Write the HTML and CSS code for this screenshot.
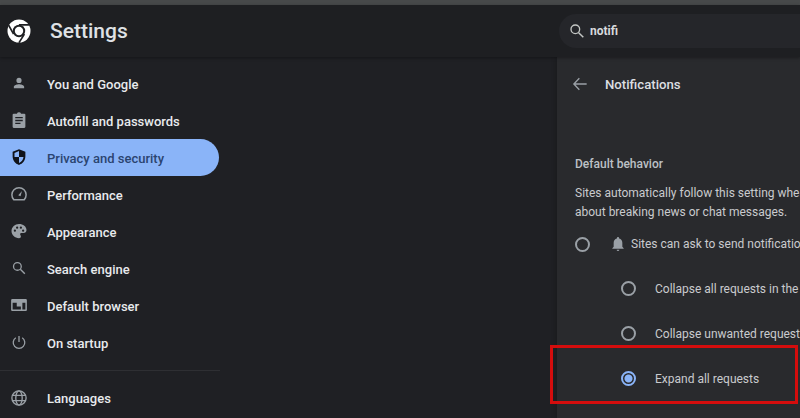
FILE: index.html
```html
<!DOCTYPE html>
<html lang="en">
<head>
<meta charset="utf-8">
<title>Settings</title>
<link rel="stylesheet" href="styles.css">
</head>
<body>
<div class="strip"></div>
<header class="header">
  <svg class="logo" viewBox="0 0 24 24" width="24" height="24"><circle cx="12" cy="12" r="11.5" fill="#fff"/><circle cx="12" cy="12" r="6.2" fill="#1f2023"/><circle cx="12" cy="12" r="4.2" fill="#fff"/><path d="M12 5.8h10.2M6.6 15.1 1.6 6.2M17.4 15.1 12 23.6" stroke="#1f2023" stroke-width="1.7" fill="none"/></svg>
  <h1 class="title">Settings</h1>
  <div class="search">
    <svg class="search-icon" viewBox="0 0 24 24" width="16" height="16"><circle cx="9.5" cy="9.5" r="6.5" fill="none" stroke="#c4c7c5" stroke-width="2"/><path d="m14.5 14.5 7 7" stroke="#c4c7c5" stroke-width="2.2"/></svg>
    <span class="query">notifi</span>
  </div>
</header>
<div class="main">
  <nav class="sidebar">
    <a class="item"><svg class="ico" viewBox="-2 -2 28 28"><circle cx="12" cy="8" r="4"/><path d="M4 20v-2c0-2.700 5.300-4 8-4s8 1.300 8 4v2z"/></svg><span>You and Google</span></a>
    <a class="item"><svg class="ico" viewBox="0 0 24 24"><path fill-rule="evenodd" d="M5 3.500h4.200a3 3 0 0 1 5.600 0H19a1.500 1.500 0 0 1 1.500 1.500v16a1.500 1.500 0 0 1-1.500 1.500H5A1.500 1.500 0 0 1 3.500 21V5A1.500 1.500 0 0 1 5 3.500zM7 8v1.800h10V8zm0 3.800v1.800h10v-1.800zm0 3.800v1.800h7v-1.800z"/></svg><span>Autofill and passwords</span></a>
    <a class="item active"><svg class="ico" viewBox="0 0 24 24"><path fill-rule="evenodd" d="M12 1.500 3.500 5v6c0 5.400 3.600 10.100 8.500 11.500 4.900-1.400 8.500-6.100 8.500-11.500V5zM12 4v8H6V6.600zm0 8h6c-.4 3.700-2.800 6.900-6 8z"/></svg><span>Privacy and security</span></a>
    <a class="item"><svg class="ico" viewBox="0 0 24 24"><path fill="none" stroke="#9aa0a6" stroke-width="2" d="M5 19.500h14c1.500-1.600 2.500-4 2.500-6.500A9.500 9.500 0 0 0 2.500 13c0 2.500 1 4.900 2.500 6.500z"/><path d="m11 13.500 5-5.500-2 7z"/></svg><span>Performance</span></a>
    <a class="item"><svg class="ico" viewBox="0 0 24 24"><path fill-rule="evenodd" d="M12 2.500C6.500 2.500 2 6.800 2 12s4.500 9.500 10 9.500c1.500 0 2.500-1 2.500-2.300 0-1.500-1-1.800-1-3 0-1 .8-1.700 2-1.700H18c2.300 0 4-1.700 4-4 0-4.500-4.500-8-10-8zM6.500 13a1.500 1.500 0 1 1 0-3 1.500 1.500 0 0 1 0 3zm3-4a1.500 1.500 0 1 1 0-3 1.500 1.500 0 0 1 0 3zm5 0a1.500 1.500 0 1 1 0-3 1.500 1.500 0 0 1 0 3zm3 4a1.500 1.500 0 1 1 0-3 1.500 1.500 0 0 1 0 3z"/></svg><span>Appearance</span></a>
    <a class="item"><svg class="ico" viewBox="-2 -2 28 28"><circle cx="9.500" cy="9.500" r="6" fill="none" stroke="#9aa0a6" stroke-width="2"/><path d="m14 14 7 7" stroke="#9aa0a6" stroke-width="2.200"/></svg><span>Search engine</span></a>
    <a class="item"><svg class="ico" viewBox="0 0 24 24"><path fill-rule="evenodd" d="M3 4h18a1.500 1.500 0 0 1 1.500 1.500v13A1.500 1.500 0 0 1 21 20H3a1.500 1.500 0 0 1-1.500-1.500v-13A1.500 1.500 0 0 1 3 4zm.5 5v9h11v-4H9v-5zm13 0v9h4V9z"/></svg><span>Default browser</span></a>
    <a class="item"><svg class="ico" viewBox="-2 -2 28 28"><path fill="none" stroke="#9aa0a6" stroke-width="2" d="M12 2.500v9.500M7 5.500a9 9 0 1 0 10 0"/></svg><span>On startup</span></a>
    <div class="rule"></div>
    <a class="item"><svg class="ico" viewBox="0 0 24 24"><g fill="none" stroke="#9aa0a6" stroke-width="1.800"><circle cx="12" cy="12" r="9.500"/><ellipse cx="12" cy="12" rx="4.300" ry="9.500"/><path d="M3 8.500h18M3 15.500h18"/></g></svg><span>Languages</span></a>
  </nav>
  <section class="panel">
    <div class="panel-head">
      <svg class="back" viewBox="0 0 24 24" width="16" height="16"><path fill="none" stroke="#9aa0a6" stroke-width="2" d="M22 12H3M11 3.500 2.800 12l8.200 8.500"/></svg>
      <h2 class="panel-title">Notifications</h2>
    </div>
    <h3 class="label">Default behavior</h3>
    <p class="desc">Sites automatically follow this setting when you visit them. You can get notifications<br>about breaking news or chat messages.</p>
    <div class="opt"><span class="radio"></span>
      <svg class="bell" viewBox="0 0 24 24" width="16" height="16"><path fill="#9aa0a6" d="M12 1.500a1.700 1.700 0 0 0-1.700 1.700v.6C7.300 4.600 5.500 7.200 5.500 10.300V16l-2 2.200V19h17v-.8l-2-2.200v-5.700c0-3.100-1.800-5.700-4.800-6.500v-.6A1.700 1.700 0 0 0 12 1.500zM10 20.500a2 2 0 0 0 4 0z"/></svg>
      <span>Sites can ask to send notifications</span></div>
    <div class="sub"><span class="radio"></span><span>Collapse all requests in the address bar</span></div>
    <div class="sub"><span class="radio"></span><span>Collapse unwanted requests (recommended)</span></div>
    <div class="sub"><span class="radio on"></span><span>Expand all requests</span></div>
    <div class="mark"></div>
  </section>
</div>
</body>
</html>
```
FILE: styles.css
```css
* { box-sizing: border-box; }
html, body { margin: 0; height: 418px; overflow: hidden; }
body { background: #1f2024; color: #e3e3e3; font-family: Roboto, "Noto Sans", sans-serif; display: flex; flex-direction: column; }
.strip { height: 5px; flex: none; background: #47494a; }
.header { height: 52px; flex: none; display: flex; align-items: center; position: relative; background: #1e1f22; box-shadow: 0 1px 3px rgba(0,0,0,.35); z-index: 1; padding-left: 7px; }
.logo { flex: none; }
.title { margin: 0 0 0 19px; font-size: 21px; font-weight: 500; color: #dfe1e5; line-height: 1; }
.search { position: absolute; left: 559px; top: 9px; width: 300px; height: 34px; border-radius: 17px; background: #25262a; display: flex; align-items: center; padding-left: 10px; gap: 5px; }
.search-icon { flex: none; }
.query { font-size: 12px; font-weight: 700; color: #d8dadd; }
.main { flex: 1; display: flex; min-height: 0; }
.sidebar { width: 557px; flex: none; padding-top: 7.500px; display: flex; flex-direction: column; }
.item { width: 219px; height: 37px; flex: none; display: flex; align-items: center; gap: 19px; padding-left: 10px; font-size: 13px; font-weight: 500; color: #e8eaed; border-radius: 0 18.500px 18.500px 0; }
.item span { margin-top: 2px; }
.ico { width: 18px; height: 18px; flex: none; fill: #9aa0a6; }
.active { background: #8ab4f8; color: #2b4470; }
.active .ico { fill: #10131a; }
.rule { width: 220px; height: 1px; flex: none; margin: 9.500px 0 8px; background: #2e2f33; }
.panel { flex: none; width: 700px; background: #292a2d; position: relative; padding: 0 0 0 18px; font-size: 12px; color: #c9cbce; box-shadow: -2px 0 4px rgba(0,0,0,.15); white-space: nowrap; }
.panel-head { height: 54px; display: flex; align-items: center; gap: 17px; margin-left: -3px; }
.back { flex: none; }
.panel-title { margin: 0; font-size: 13.200px; font-weight: 500; color: #dcdee1; }
.label { margin: 0; padding-top: 44px; font-size: 12px; font-weight: 500; color: #bdc1c6; line-height: 18px; }
.desc { margin: 11px 0 0; line-height: 19px; }
.opt { display: flex; align-items: center; height: 24px; margin-top: 10px; }
.opt .radio { margin-right: 20px; }
.bell { flex: none; margin-right: 5px; }
.sub { display: flex; align-items: center; height: 45px; padding-left: 46px; gap: 19px; }
.opt + .sub { margin-top: 10px; }
.radio { width: 15px; height: 15px; flex: none; border: 2px solid #9aa0a6; border-radius: 50%; }
.radio.on { border-color: #8ab4f8; background: radial-gradient(circle, #8ab4f8 0 3.500px, transparent 4.500px); }
.mark { position: absolute; left: -7px; top: 288px; width: 248px; height: 59px; border: 3px solid #d40d0d; }
```
